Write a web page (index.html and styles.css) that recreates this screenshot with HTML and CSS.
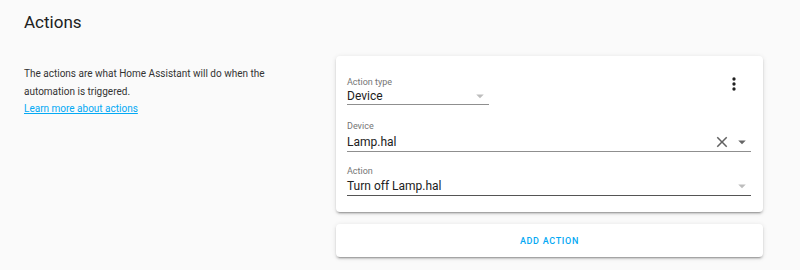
FILE: index.html
```html
<html>
<head>
    <link rel="stylesheet" href="styles.css">
</head>
<body>
    <main class="page">
        <h1 class="header">Actions</h1>
        <div class="layout">
            <div class="intro">
                <p>The actions are what Home Assistant will do when the automation is triggered.</p>
                <a href="#" class="learn">Learn more about actions</a>
            </div>
            <div class="content">
                <div class="card">
                    <div class="card-top">
                        <div class="field field-type">
                            <label class="label">Action type</label>
                            <div class="value">
                                <span class="text">Device</span>
                                <svg class="arrow light" viewBox="0 0 24 24"><path d="M7,10L12,15L17,10H7Z"/></svg>
                            </div>
                        </div>
                        <svg class="menu" viewBox="0 0 24 24"><path d="M12,16A2,2 0 0,1 14,18A2,2 0 0,1 12,20A2,2 0 0,1 10,18A2,2 0 0,1 12,16M12,10A2,2 0 0,1 14,12A2,2 0 0,1 12,14A2,2 0 0,1 10,12A2,2 0 0,1 12,10M12,4A2,2 0 0,1 14,6A2,2 0 0,1 12,8A2,2 0 0,1 10,6A2,2 0 0,1 12,4Z"/></svg>
                    </div>
                    <div class="field field-device">
                        <label class="label">Device</label>
                        <div class="value">
                            <span class="text">Lamp.hal</span>
                            <svg class="clear" viewBox="0 0 24 24"><path d="M19,6.41L17.59,5L12,10.59L6.41,5L5,6.41L10.59,12L5,17.59L6.41,19L12,13.41L17.59,19L19,17.59L13.41,12L19,6.41Z"/></svg>
                            <svg class="arrow" viewBox="0 0 24 24"><path d="M7,10L12,15L17,10H7Z"/></svg>
                        </div>
                    </div>
                    <div class="field field-action">
                        <label class="label">Action</label>
                        <div class="value">
                            <span class="text">Turn off Lamp.hal</span>
                            <svg class="arrow light" viewBox="0 0 24 24"><path d="M7,10L12,15L17,10H7Z"/></svg>
                        </div>
                    </div>
                </div>
                <button class="card add-btn">Add action</button>
            </div>
        </div>
    </main>
</body>
</html>
```

FILE: styles.css
```css
* {
    margin: 0;
    padding: 0;
    box-sizing: border-box;
}
body {
    background-color: #fafafa;
    font-family: Roboto, "Liberation Sans", sans-serif;
    color: #212121;
}
.page {
    padding: 0 37px 0 24px;
}
.header {
    font-size: 17px;
    font-weight: 400;
    line-height: 24px;
    margin-top: 10px;
}
.layout {
    display: flex;
    gap: 24px;
    margin-top: 22px;
}
.intro {
    flex: 0 0 288px;
    padding-top: 9px;
    font-size: 10px;
    line-height: 17.5px;
    color: #333;
}
.learn {
    color: #03a9f4;
}
.content {
    flex: 1;
}
.card {
    background: #fff;
    border-radius: 4px;
    box-shadow: 0 2px 2px 0 rgba(0,0,0,0.14), 0 1px 5px 0 rgba(0,0,0,0.12), 0 3px 1px -2px rgba(0,0,0,0.2);
}
.card:first-child {
    padding: 20px 12px 16px 11px;
}
.card-top {
    display: flex;
    justify-content: space-between;
    align-items: flex-start;
}
.menu {
    width: 20px;
    height: 20px;
    margin-top: -2px;
    margin-right: 7px;
    fill: #212121;
}
.field-type {
    width: 142px;
}
.label {
    display: block;
    font-size: 9px;
    line-height: 12px;
    color: #757575;
}
.value {
    display: flex;
    align-items: center;
    height: 20px;
    font-size: 12px;
    border-bottom: 1px solid #8f8f8f;
}
.text {
    flex: 1;
}
.field-type .value {
    height: 17px;
}
.field-device {
    margin-top: 15px;
}
.field-action {
    margin-top: 13px;
}
.field-action .value {
    height: 19px;
    border-bottom-color: #555;
}
.arrow {
    width: 18px;
    height: 18px;
    fill: #666;
}
.arrow.light {
    fill: #bdbdbd;
}
.clear {
    width: 18px;
    height: 18px;
    margin-right: 2px;
    fill: #616161;
}
.add-btn {
    display: block;
    width: 100%;
    height: 33px;
    margin-top: 12px;
    border: none;
    font-family: Roboto, "Liberation Sans", sans-serif;
    font-size: 9px;
    font-weight: 500;
    letter-spacing: 0.7px;
    text-transform: uppercase;
    color: #03a9f4;
}
```
